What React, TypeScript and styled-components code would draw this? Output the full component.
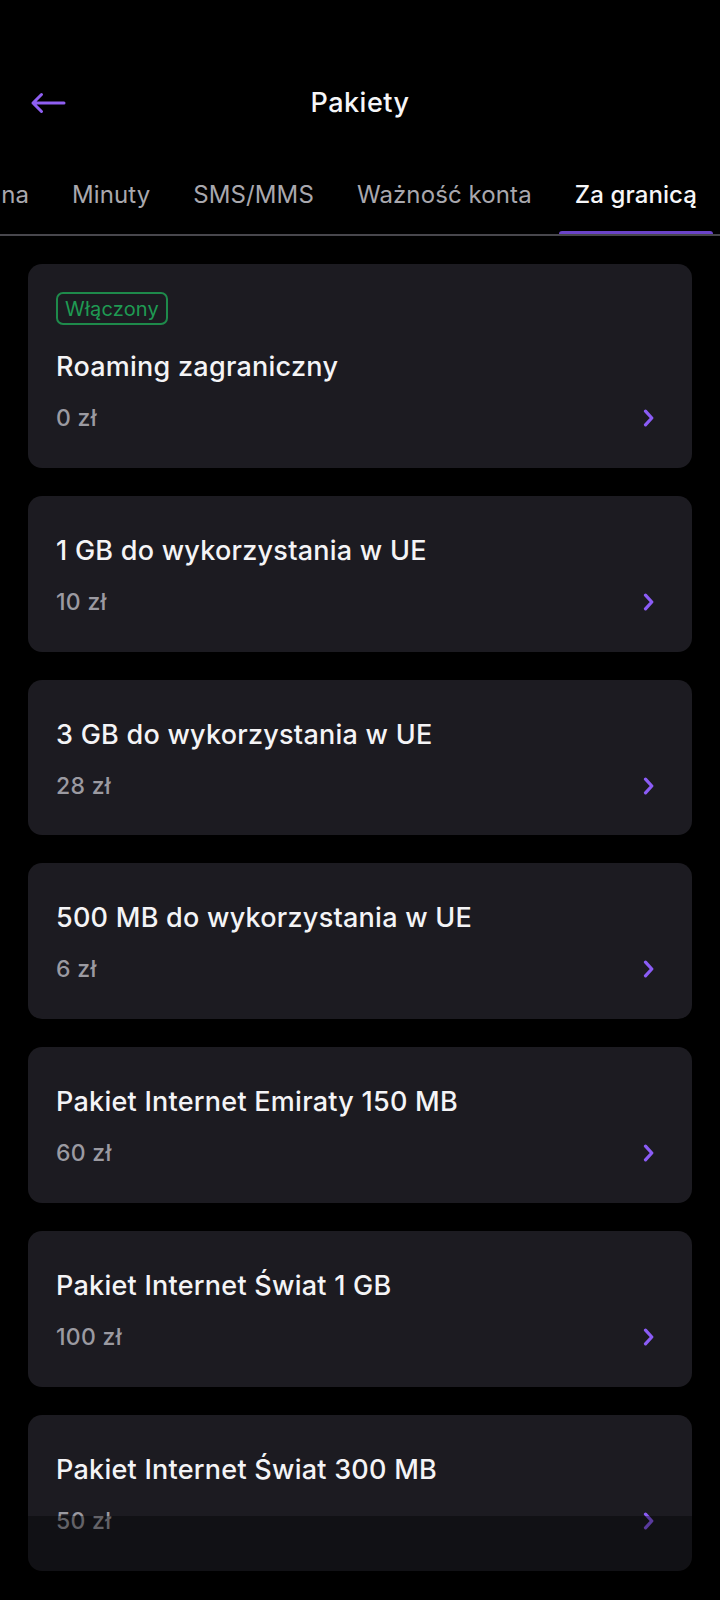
import React from "react";
import styled, { createGlobalStyle } from "styled-components";

const GlobalStyle = createGlobalStyle`
  html, body {
    margin: 0;
    padding: 0;
    background: #000;
  }
  body {
    font-family: Inter, "Noto Sans", "Liberation Sans", sans-serif;
    color: #f4f4f6;
    -webkit-font-smoothing: antialiased;
  }
  * { box-sizing: border-box; }
`;

const Page = styled.div`
  width: 720px;
  min-height: 1600px;
  background: #000;
  padding-top: 64px;
  padding-bottom: 40px;
`;

const Header = styled.header`
  height: 78px;
  display: grid;
  grid-template-columns: 1fr auto 1fr;
  align-items: center;
  padding: 0 30px;
`;

const BackButton = styled.button`
  justify-self: start;
  background: none;
  border: none;
  padding: 0;
  display: flex;
  align-items: center;
  cursor: pointer;
`;

const Title = styled.h1`
  margin: 0;
  font-size: 27px;
  font-weight: 500;
  line-height: 32px;
  color: #f6f6f8;
  letter-spacing: 0.5px;
`;

const TabBar = styled.nav`
  display: flex;
  justify-content: flex-end;
  gap: 11px;
  overflow: hidden;
  padding-right: 7px;
  border-bottom: 2px solid #48474d;
  height: 94px;
`;

const Tab = styled.div<{ $active?: boolean }>`
  position: relative;
  flex: none;
  padding: 37px 16px 0;
  font-size: 24px;
  line-height: 32px;
  font-weight: ${(p) => (p.$active ? 500 : 400)};
  white-space: nowrap;
  letter-spacing: 0.1px;
  color: ${(p) => (p.$active ? "#f6f6f8" : "#a9a8ae")};

  &::after {
    content: "";
    display: ${(p) => (p.$active ? "block" : "none")};
    position: absolute;
    left: 0;
    right: 0;
    bottom: -2px;
    height: 5px;
    border-radius: 3px 3px 0 0;
    background: #6a43c8;
  }
`;

const List = styled.main`
  display: flex;
  flex-direction: column;
  gap: 28px;
  padding: 28px 28px 0;
`;

const Card = styled.a`
  display: flex;
  flex-direction: column;
  background: #1c1b21;
  border-radius: 14px;
  padding: 28px 28px 34.8px;
  text-decoration: none;
  color: inherit;
`;

const Badge = styled.span`
  align-self: flex-start;
  height: 33px;
  display: inline-flex;
  align-items: center;
  padding: 0 7px;
  border: 2px solid #1e8a4b;
  border-radius: 7px;
  color: #1f9a53;
  font-size: 20px;
  font-weight: 400;
  letter-spacing: 0.2px;
  margin-bottom: 15px;
`;

const CardTitle = styled.div`
  margin-top: 11px;
  font-size: 27px;
  line-height: 32px;
  font-weight: 500;
  color: #f4f4f6;
  letter-spacing: 0.25px;
`;

const PriceRow = styled.div`
  margin-top: 20px;
  height: 30px;
  display: flex;
  align-items: center;
  justify-content: space-between;
`;

const Price = styled.span`
  font-size: 23px;
  line-height: 30px;
  font-weight: 500;
  letter-spacing: 0.3px;
  color: #9b9aa1;
`;

const ChevronWrap = styled.span`
  display: flex;
  margin-right: 9px;
`;

const NavOverlay = styled.div`
  position: fixed;
  left: 0;
  right: 0;
  bottom: 0;
  height: 84px;
  background: rgba(0, 0, 0, 0.36);
  pointer-events: none;
`;

const ArrowLeft = () => (
  <svg width="36" height="22" viewBox="0 0 36 22" fill="none">
    <path
      d="M34 11H3M11.5 2.5L3 11l8.5 8.5"
      stroke="#8f5ff2"
      strokeWidth="3"
      strokeLinecap="round"
      strokeLinejoin="round"
    />
  </svg>
);

const Chevron = () => (
  <svg width="12" height="18" viewBox="0 0 12 18" fill="none">
    <path
      d="M2.5 2.2l6.3 6.8-6.3 6.8"
      stroke="#8b5cf6"
      strokeWidth="3.2"
      strokeLinecap="round"
      strokeLinejoin="round"
    />
  </svg>
);

type Pack = { name: string; price: string; active?: boolean };

const packs: Pack[] = [
  { name: "Roaming zagraniczny", price: "0 zł", active: true },
  { name: "1 GB do wykorzystania w UE", price: "10 zł" },
  { name: "3 GB do wykorzystania w UE", price: "28 zł" },
  { name: "500 MB do wykorzystania w UE", price: "6 zł" },
  { name: "Pakiet Internet Emiraty 150 MB", price: "60 zł" },
  { name: "Pakiet Internet Świat 1 GB", price: "100 zł" },
  { name: "Pakiet Internet Świat 300 MB", price: "50 zł" },
];

const tabs = ["Internet", "Specjalna", "Minuty", "SMS/MMS", "Ważność konta", "Za granicą"];

export default function App() {
  return (
    <>
      <GlobalStyle />
      <Page>
        <Header>
          <BackButton aria-label="Wstecz">
            <ArrowLeft />
          </BackButton>
          <Title>Pakiety</Title>
          <span />
        </Header>
        <TabBar>
          {tabs.map((t) => (
            <Tab key={t} $active={t === "Za granicą"}>
              {t}
            </Tab>
          ))}
        </TabBar>
        <List>
          {packs.map((p) => (
            <Card key={p.name} href="#">
              {p.active && <Badge>Włączony</Badge>}
              <CardTitle>{p.name}</CardTitle>
              <PriceRow>
                <Price>{p.price}</Price>
                <ChevronWrap>
                  <Chevron />
                </ChevronWrap>
              </PriceRow>
            </Card>
          ))}
        </List>
      </Page>
      <NavOverlay />
    </>
  );
}
